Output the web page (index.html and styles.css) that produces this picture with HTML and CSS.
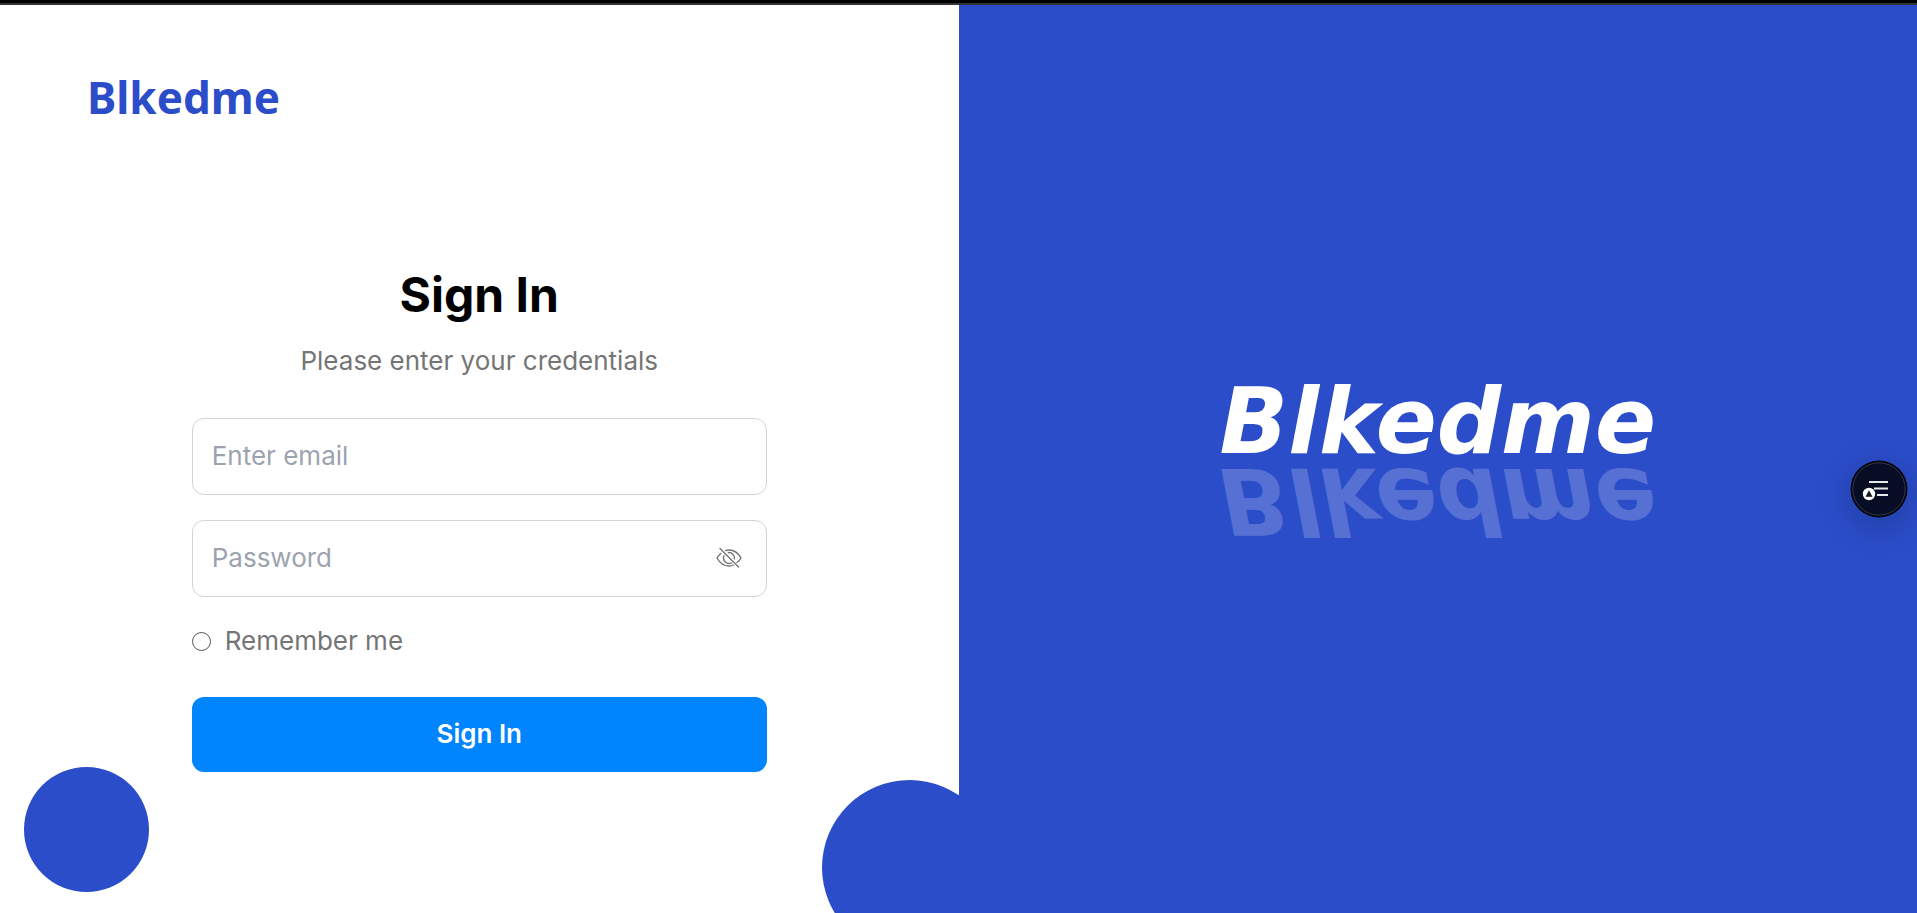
FILE: index.html
```html
<!DOCTYPE html>
<html lang="en">
<head>
<meta charset="utf-8">
<meta name="viewport" content="width=device-width, initial-scale=1">
<title>Blkedme - Sign In</title>
<link rel="stylesheet" href="styles.css">
</head>
<body>
<div class="page">
  <main class="panel-form">
    <a class="brand" href="#">Blkedme</a>
    <form class="signin">
      <h1 class="title">Sign In</h1>
      <p class="subtitle">Please enter your credentials</p>
      <input class="field" type="email" placeholder="Enter email" aria-label="Enter email">
      <div class="password">
        <input class="field" type="password" placeholder="Password" aria-label="Password">
        <button class="toggle" type="button" aria-label="Show password">
          <svg class="toggle-icon" viewBox="0 0 26 22" fill="none" stroke="currentColor" stroke-width="1.4" stroke-linecap="round" stroke-linejoin="round">
            <path d="M4 1.500L22.500 20"/>
            <path d="M4.800 6.500Q2.300 8.500 1 11Q5.500 19 13 19Q15.500 19 17.300 18"/>
            <path d="M9.500 3.600Q11.300 3 13 3Q20.500 3 25 11Q23.800 13.500 21 15.500"/>
            <path d="M8 8.800A5.500 5.500 0 0 0 15.500 15.900"/>
            <path d="M12.300 5.600A5.500 5.500 0 0 1 18.400 11.800"/>
          </svg>
        </button>
      </div>
      <label class="remember"><input class="remember-box" type="radio">Remember me</label>
      <button class="submit" type="submit">Sign In</button>
    </form>
    <span class="dot dot-left"></span>
    <span class="dot dot-right"></span>
  </main>
  <aside class="panel-brand">
    <div class="wordmark">Blkedme</div>
    <div class="wordmark reflection" aria-hidden="true">Blkedme</div>
  </aside>
</div>
<button class="fab" type="button" aria-label="Open menu">
  <svg class="fab-icon" viewBox="0 0 58 58">
    <circle cx="29" cy="29" r="28.500" fill="#02040d"/>
    <circle cx="29" cy="29" r="26.200" fill="#080d26" stroke="#34384a" stroke-width="1"/>
    <path d="M19 22H38M24 28.500H38M27 35H38" stroke="#e4e9ec" stroke-width="2.200"/>
    <circle cx="19" cy="34" r="6.200" fill="#fff"/>
    <path d="M19 30.800L22 36.500H16Z" fill="#15171c" stroke="#15171c" stroke-width=".6"/>
  </svg>
</button>
</body>
</html>
```
FILE: styles.css
```css
* { box-sizing: border-box; }
body {
  margin: 0;
  font-family: Inter, "Open Sans", sans-serif;
  font-size: 26px;
  background: #fff;
  color: #000;
}
.page {
  display: grid;
  grid-template-columns: 1fr 1fr;
  min-height: 100vh;
  border-top: 3px solid #000;
  box-shadow: inset 0 2px #333;
}
.panel-form {
  position: relative;
  overflow: hidden;
  padding: 62px 87px 0;
}
.brand {
  display: block;
  font: 700 44px/64px "Noto Sans", sans-serif;
  color: #2b4dc9;
  text-decoration: none;
}
.signin {
  display: flex;
  flex-direction: column;
  width: 60vw;
  max-width: calc(50vw * 0.6);
  margin: 130px auto 0;
}
.title {
  margin: 0;
  font-size: 48px;
  line-height: 72px;
  font-weight: 700;
  text-align: center;
}
.subtitle {
  margin: 10px 0 37px;
  line-height: 40px;
  color: #757575;
  text-align: center;
}
.field {
  display: block;
  width: 100%;
  height: 77px;
  padding: 0 19px 2px;
  border: 1px solid #d1d5db;
  border-radius: 12px;
  background: #fff;
  font: inherit;
  color: #000;
}
.field::placeholder { color: #9ca3af; opacity: 1; }
.password { position: relative; margin-top: 25px; }
.password .field { padding-right: 72px; }
.toggle {
  position: absolute;
  top: 0;
  bottom: 2px;
  right: 25px;
  padding: 0;
  border: 0;
  background: none;
  color: #757575;
}
.toggle-icon { display: block; width: 26px; height: 22px; }
.remember {
  display: flex;
  align-items: center;
  gap: 14px;
  margin: 24px 0 36px;
  line-height: 40px;
  color: #757575;
}
.remember-box {
  appearance: none;
  width: 19px;
  height: 19px;
  margin: 0;
  border: 1px solid #555;
  border-radius: 50%;
}
.submit {
  height: 75px;
  padding: 0 0 2px;
  border: 0;
  border-radius: 12px;
  background: #0085ff;
  color: #fff;
  font: inherit;
  font-weight: 600;
}
.dot {
  position: absolute;
  border-radius: 50%;
  background: #2b4dc9;
}
.dot-left { left: 24px; bottom: 21px; width: 125px; height: 125px; }
.dot-right { right: -38px; bottom: -42px; width: 175px; height: 175px; }
.panel-brand {
  display: flex;
  flex-direction: column;
  align-items: center;
  justify-content: center;
  padding-top: 4px;
  margin-top: 2px;
  background: #2b4dc9;
}
.wordmark {
  font-family: "DejaVu Sans", sans-serif;
  font-size: 90px;
  line-height: 78px;
  font-weight: 700;
  font-style: italic;
  color: #fff;
}
.reflection { transform: scaleY(-1); opacity: .2; }
.fab {
  position: fixed;
  right: 9px;
  top: 460px;
  width: 58px;
  height: 58px;
  padding: 0;
  border: 0;
  border-radius: 50%;
  background: none;
  box-shadow: 0 8px 32px rgba(8, 13, 38, .25);
}
.fab-icon { display: block; width: 100%; height: 100%; }
```
